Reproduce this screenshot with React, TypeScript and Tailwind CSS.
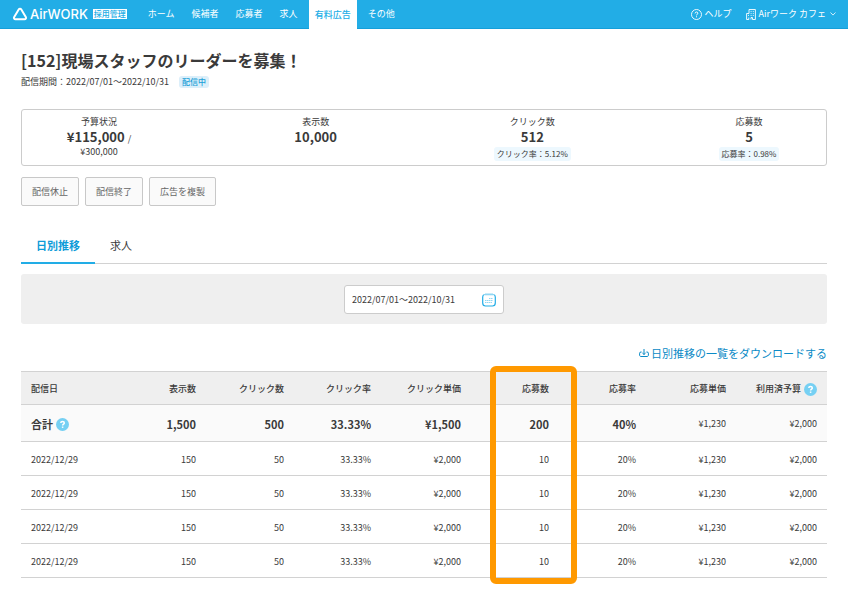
import React from 'react';

const navItems = ['ホーム', '候補者', '応募者', '求人', '有料広告', 'その他'];

const columns = [
  { label: '配信日', width: 'w-[97px]' },
  { label: '表示数', width: 'w-[88px]' },
  { label: 'クリック数', width: 'w-[88px]' },
  { label: 'クリック率', width: 'w-[87px]' },
  { label: 'クリック単価', width: 'w-[90px]' },
  { label: '応募数', width: 'w-[88px]' },
  { label: '応募率', width: 'w-[87px]' },
  { label: '応募単価', width: 'w-[90px]' },
  { label: '利用済予算', width: 'w-[91px]', help: true },
];

const totals = ['1,500', '500', '33.33%', '¥1,500', '200', '40%', '¥1,230', '¥2,000'];

const dailyRow = ['2022/12/29', '150', '50', '33.33%', '¥2,000', '10', '20%', '¥1,230', '¥2,000'];
const rows = [dailyRow, dailyRow, dailyRow, dailyRow];

const HelpBadge: React.FC = () => (
  <button
    type="button"
    aria-label="説明を表示"
    className="ml-[3px] inline-flex h-[13px] w-[13px] shrink-0 items-center justify-center rounded-full bg-[#76d0f3] text-white"
  >
    <svg viewBox="0 0 13 13" className="h-[13px] w-[13px]" fill="none" stroke="currentColor" strokeWidth="1.5">
      <path d="M4.8 5.1c0-1.1.7-1.7 1.7-1.7s1.8.6 1.8 1.5c0 1.2-1.7 1.2-1.7 2.6" />
      <path d="M6.6 8.5v1.4" />
    </svg>
  </button>
);

const Header: React.FC = () => (
  <header className="flex h-[29px] items-center border-b border-[#149fda] bg-[#22ade6] px-3 text-white">
    <a href="#" className="flex items-center">
      <svg viewBox="0 0 16 14" className="h-[14px] w-4" fill="none" stroke="currentColor" strokeWidth="2">
        <path d="M6.7 2.5 2.2 9.9c-.7 1.2 0 2.4 1.3 2.4h9c1.3 0 2-1.2 1.3-2.4L9.3 2.5c-.6-1-2-1-2.6 0Z" />
      </svg>
      <span className="ml-[2px] font-['Inter','Liberation_Sans',sans-serif] text-[13px] leading-[14px] font-medium">
        AirWORK
      </span>
      <span className="ml-[5px] bg-white px-px text-[8px] leading-[10px] font-medium text-[#22ade6]">採用管理</span>
    </a>
    <nav className="ml-[15px] flex gap-[5px] self-stretch">
      {navItems.map((item) => (
        <a
          key={item}
          href="#"
          className={
            item === '有料広告'
              ? '-mb-px flex items-center bg-white px-[6px] font-medium text-[#22ade6]'
              : 'flex items-center px-[6px]'
          }
        >
          {item}
        </a>
      ))}
    </nav>
    <div className="ml-auto flex items-center gap-[14px]">
      <a href="#" className="flex items-center gap-[3px]">
        <svg viewBox="0 0 11 11" className="h-[11px] w-[11px]" fill="none" stroke="currentColor">
          <circle cx="5.5" cy="5.5" r="5" strokeWidth="0.9" />
          <path d="M4.1 4.4c0-.9.6-1.4 1.4-1.4s1.4.5 1.4 1.2c0 1-1.4 1-1.4 2.2M5.5 7.3v1" />
        </svg>
        ヘルプ
      </a>
      <button type="button" className="flex items-center">
        <svg viewBox="0 0 10 11" className="mr-[3px] h-[11px] w-[10px]" fill="none" stroke="currentColor" strokeWidth="0.9">
          <path d="M3 4.5V.5h6.4v10H6.5v-2H5v2M3 4.5H.6v6h2.2v-2" />
          <path d="M4.6 2.4h1M6.8 2.4h1M4.6 4.4h1M6.8 4.4h1M4.6 6.4h1M6.8 6.4h1M2 6.4h1" />
        </svg>
        Airワーク カフェ
        <svg viewBox="0 0 6 6" className="ml-1 h-[6px] w-[6px]" fill="none" stroke="currentColor" strokeWidth="0.8">
          <path d="m.5 1.5 2.5 2.6 2.5-2.6" />
        </svg>
      </button>
    </div>
  </header>
);

const Summary: React.FC = () => (
  <section className="mt-[18px] flex justify-between rounded-[3px] border border-[#ccc] pt-[5px] pb-1 text-center leading-[14px]">
    <div className="w-[154px]">
      <p>予算状況</p>
      <p className="text-[13px] leading-4 font-bold">
        ¥115,000 <span className="text-[9px] leading-none font-normal">/</span>
      </p>
      <p>¥300,000</p>
    </div>
    <div className="w-[154px]">
      <p>表示数</p>
      <p className="text-[13px] leading-4 font-bold">10,000</p>
    </div>
    <div className="w-[154px]">
      <p>クリック数</p>
      <p className="text-[13px] leading-4 font-bold">512</p>
      <p className="mx-auto mt-[2px] w-fit rounded-[3px] bg-[#edf8fe] px-[3px] text-[8px]">クリック率：5.12%</p>
    </div>
    <div className="w-[154px]">
      <p>応募数</p>
      <p className="text-[13px] leading-4 font-bold">5</p>
      <p className="mx-auto mt-[2px] w-fit rounded-[3px] bg-[#edf8fe] px-[3px] text-[8px]">応募率：0.98%</p>
    </div>
  </section>
);

const DailyTable: React.FC = () => (
  <div className="relative mt-[9px]">
    <table className="w-full table-fixed border-separate border-spacing-0 text-right whitespace-nowrap">
      <thead>
        <tr className="h-[34px] bg-[#efefef]">
          {columns.map((col, i) => (
            <th
              key={col.label}
              scope="col"
              className={`${col.width} border-y border-[#d2d2d2] px-[10px] pt-[2px] font-medium ${i === 0 ? 'text-left' : 'text-right'}`}
            >
              {col.help ? (
                <span className="flex items-center justify-end">
                  {col.label}
                  <HelpBadge />
                </span>
              ) : (
                col.label
              )}
            </th>
          ))}
        </tr>
      </thead>
      <tbody>
        <tr className="h-[37px] bg-[#fafafa]">
          <th scope="row" className="border-b border-[#d2d2d2] px-[10px] pt-[2px] text-left text-[11px] font-bold">
            <span className="flex items-center">
              合計
              <HelpBadge />
            </span>
          </th>
          {totals.map((value, i) => (
            <td
              key={i}
              className={`border-b border-[#d2d2d2] px-[10px] pt-[2px] ${i < 6 ? 'text-[11px] font-bold' : ''}`}
            >
              {value}
            </td>
          ))}
        </tr>
        {rows.map((row, r) => (
          <tr key={r} className="h-[34px]">
            {row.map((value, i) => (
              <td
                key={i}
                className={`border-b border-[#d2d2d2] px-[10px] pt-[2px] ${i === 0 ? 'text-left' : ''}`}
              >
                {value}
              </td>
            ))}
          </tr>
        ))}
      </tbody>
    </table>
    {/* Marks the applications column */}
    <div className="pointer-events-none absolute -top-[5px] right-[31%] -bottom-[6px] w-[87px] rounded-[6px] border-[6px] border-[#ff9900]" />
  </div>
);

const App: React.FC = () => {
  return (
    <div className="min-h-screen bg-white font-['Noto_Sans_CJK_JP',sans-serif] text-[9px] text-[#3a3a3a]" lang="ja">
      <Header />
      <main className="px-[21px] pt-[19px] pb-4">
        <h1 className="mb-px text-base leading-6 font-bold">[152]現場スタッフのリーダーを募集！</h1>
        <p className="flex items-center leading-[18px]">
          配信期間：2022/07/01〜2022/10/31
          <span className="ml-[10px] rounded-[3px] bg-[#dceffa] px-[3px] text-[8px] leading-[12px] font-medium text-[#1a9fd8]">
            配信中
          </span>
        </p>

        <Summary />

        <div className="mt-[11px] flex gap-[6px]">
          {['配信休止', '配信終了', '広告を複製'].map((label) => (
            <button
              key={label}
              type="button"
              className="rounded-[2px] border border-[#c8c8c8] bg-[#fafafa] px-[10px] py-[6px] leading-[15px] text-[#666]"
            >
              {label}
            </button>
          ))}
        </div>

        <div role="tablist" className="mt-[22px] flex border-b border-[#d2d2d2] text-[11px] leading-[18px]">
          <button
            type="button"
            role="tab"
            aria-selected="true"
            className="-mb-px border-b-2 border-[#22ade6] px-[15px] py-2 font-bold text-[#0e9bd8]"
          >
            日別推移
          </button>
          <button
            type="button"
            role="tab"
            aria-selected="false"
            className="-mb-px border-b-2 border-transparent px-[15px] py-2"
          >
            求人
          </button>
        </div>

        <div className="mt-[10px] flex justify-center rounded-[3px] bg-[#efefef] pt-[11px] pb-[10px]">
          <label className="flex h-[29px] w-[160px] items-center rounded-[3px] border border-[#ccc] bg-white px-[7px]">
            <input
              type="text"
              aria-label="期間"
              defaultValue="2022/07/01〜2022/10/31"
              className="min-w-0 flex-1 bg-transparent outline-none"
            />
            <svg viewBox="0 0 14 14" className="h-[14px] w-[14px]" fill="none" stroke="#22ade6">
              <path d="M2.600 1.500C1.400 1.700.7 2.500.7 4v6c0 2 .8 3 2.800 3h7c2 0 2.800-1 2.800-3V4c0-1.500-.7-2.300-1.900-2.500" strokeWidth="1.200" />
              <path d="M4 .5v1.800M6 .5v1.800M8 .5v1.800M10 .5v1.800" />
              <path d="M7 5.500h4M3 7.500h8M3 9.500h7" strokeWidth="1.200" strokeDasharray="1.500 0.500" opacity="0.5" />
            </svg>
          </label>
        </div>

        <div className="mt-5 flex justify-end text-[11px] leading-[18px]">
          <a href="#" className="flex items-center gap-[2px] text-[#0a8ac6]">
            <svg viewBox="0 0 10 10" className="h-[10px] w-[10px]" fill="none" stroke="currentColor">
              <path d="M2.600 4H2C1.100 4 .6 4.400.6 5.200v1.800C.6 8 1.100 8.500 2 8.500h6c.9 0 1.400-.5 1.400-1.500V5.200C9.400 4.400 8.900 4 8 4h-.6" />
              <path d="M5 1v5.500M3.400 5 5 6.500 6.600 5" />
            </svg>
            日別推移の一覧をダウンロードする
          </a>
        </div>

        <DailyTable />
      </main>
    </div>
  );
};

export default App;
